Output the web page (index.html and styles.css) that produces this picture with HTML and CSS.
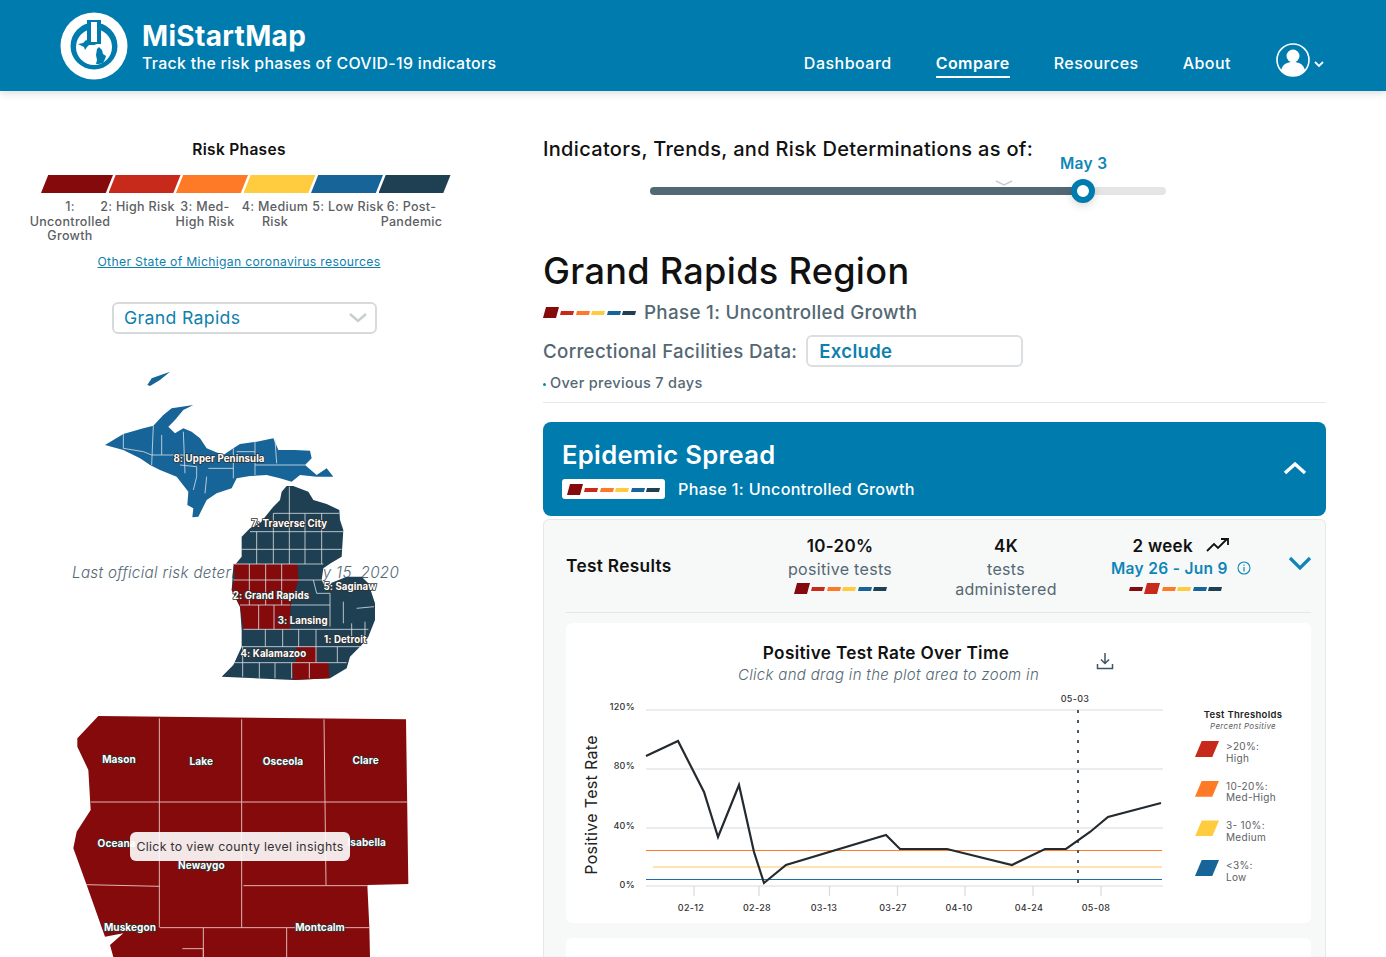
FILE: index.html
```html
<!DOCTYPE html>
<html lang="en">
<head>
    <meta charset="UTF-8">
    <meta name="viewport" content="width=device-width, initial-scale=1.0">
    <title>MiStartMap</title>
    <link rel="stylesheet" href="styles.css">
</head>
<body>

<svg class="defs">
    <symbol id="bar-first" viewBox="0 0 93 11">
        <polygon points="3,0 16,0 13,11 0,11" fill="#850a0b"/>
        <polygon points="18,4 31,4 30,8 17,8" fill="#c7291a"/>
        <polygon points="34,4 47,4 46,8 33,8" fill="#ff7a26"/>
        <polygon points="49,4 62,4 61,8 48,8" fill="#ffcc40"/>
        <polygon points="65,4 78,4 77,8 64,8" fill="#176499"/>
        <polygon points="80,4 93,4 92,8 79,8" fill="#1f3f52"/>
    </symbol>
    <symbol id="bar-second" viewBox="0 0 93 11">
        <polygon points="1,4 14,4 13,8 0,8" fill="#850a0b"/>
        <polygon points="18,0 31,0 28,11 15,11" fill="#c7291a"/>
        <polygon points="34,4 47,4 46,8 33,8" fill="#ff7a26"/>
        <polygon points="49,4 62,4 61,8 48,8" fill="#ffcc40"/>
        <polygon points="65,4 78,4 77,8 64,8" fill="#176499"/>
        <polygon points="80,4 93,4 92,8 79,8" fill="#1f3f52"/>
    </symbol>
</svg>

<header class="top-bar">
    <svg class="logo" viewBox="0 0 68 68">
        <circle cx="34" cy="34" r="33.5" fill="#fff"/>
        <circle cx="34" cy="34" r="23.5" fill="#007bad"/>
        <circle cx="34" cy="35" r="18" fill="#fff"/>
        <rect x="27" y="8" width="14" height="24" fill="#007bad"/>
        <rect x="31" y="10" width="6" height="20" fill="#fff"/>
        <path d="M18 32l5-1 3-3 2 1 3 2 6 1-3 1-5 0-2 2-2 3-1-3-4-2z" fill="#007bad"/>
        <path d="M37 37l2-2 3 3 1 4 3 2-1 3-2 4-4 1-3 0 1-4-1-5z" fill="#007bad"/>
    </svg>
    <div class="brand">
        <div class="brand-name">MiStartMap</div>
        <div class="brand-tag">Track the risk phases of COVID-19 indicators</div>
    </div>
    <nav class="nav">
        <a class="nav-link">Dashboard</a>
        <a class="nav-link active">Compare</a>
        <a class="nav-link">Resources</a>
        <a class="nav-link">About</a>
        <svg class="avatar" viewBox="0 0 50 36">
            <circle cx="17" cy="17" r="16" fill="none" stroke="#fff" stroke-width="1.6"/>
            <circle cx="17" cy="13" r="6.5" fill="#fff"/>
            <path d="M5 27c2-6 6-8 12-8s10 2 12 8c-3 4-7 6-12 6s-9-2-12-6z" fill="#fff"/>
            <path d="M39 19l4 4 4-4" fill="none" stroke="#fff" stroke-width="1.8"/>
        </svg>
    </nav>
</header>

<main class="page">
    <section class="left-col">
        <h3 class="risk-title">Risk Phases</h3>
        <div class="risk-bars">
            <span class="risk-bar phase-1"></span>
            <span class="risk-bar phase-2"></span>
            <span class="risk-bar phase-3"></span>
            <span class="risk-bar phase-4"></span>
            <span class="risk-bar phase-5"></span>
            <span class="risk-bar phase-6"></span>
        </div>
        <div class="risk-labels">
            <div class="risk-label"><span>1:</span><span>Uncontrolled</span><span>Growth</span></div>
            <div class="risk-label"><span>2: High Risk</span></div>
            <div class="risk-label"><span>3: Med-</span><span>High Risk</span></div>
            <div class="risk-label"><span>4: Medium</span><span>Risk</span></div>
            <div class="risk-label"><span>5: Low Risk</span></div>
            <div class="risk-label"><span>6: Post-</span><span>Pandemic</span></div>
        </div>
        <a class="state-link">Other State of Michigan coronavirus resources</a>

        <div class="region-select">
            <span>Grand Rapids</span>
            <svg class="select-arrow" viewBox="0 0 18 10"><path d="M1 1l8 7 8-7" fill="none" stroke="#c8cdd0" stroke-width="2.4"/></svg>
        </div>

        <div class="state-map">
            <p class="map-note">Last official risk determination May 15, 2020</p>
            <svg class="state-svg" viewBox="0 0 1050 990">
                <path class="mi-blue" d="M262 75L275 55 330 35 300 60 270 78Z"/>
                <path class="mi-blue" d="M135 255L190 222 250 205 280 197 310 165 335 145 400 135 370 150 345 180 325 200 345 220 370 205 395 215 420 235 440 265 465 275 490 285 520 265 540 252 590 245 640 235 655 270 705 270 750 272 755 295 735 315 770 345 800 325 820 350 770 350 720 345 695 365 660 355 620 345 570 348 530 355 515 385 470 400 440 420 415 470 397 472 400 445 382 435 385 395 350 350 300 330 270 315 240 295 190 270Z"/>
                <path class="mi-navy" d="M680 378L700 378 745 395 760 420 800 432 838 450 840 480 850 510 845 590 812 610 790 625 785 660 800 690 815 668 860 650 905 650 925 670 945 730 945 780 925 830 905 855 870 890 860 925 810 955 700 960 485 950 520 915 545 860 545 810 540 740 515 690 520 620 545 590 545 530 570 505 600 490 640 440 660 420 665 395Z"/>
                <path class="mi-red" d="M520 612L712 612 716 658 692 735 690 808 550 808 540 740 515 690 525 650Z"/>
                <path class="mi-red" d="M708 862L768 860 770 907 805 907 808 955 700 960 696 908 708 906Z"/>
                <path class="mi-lines" d="M190 222V265L250 275 275 285M280 197L275 315M305 225V285M275 285H375M370 215L375 340M360 315L410 320V350L400 390M440 350L435 400M445 325H520M520 265V355M585 245V345M530 275H585M645 238L650 310M585 315H735"/>
                <path class="mi-lines" d="M640 460H838M570 515H850M545 568H845M520 612H790M520 660H785M540 735H690M550 808H925M545 860H905M520 908H860M590 515V612M640 460V612M688 380V612M735 460V612M785 460V612M568 612V735M617 612V735M665 612V735M596 735V808M642 735V808M616 808V860M668 808V860M716 808V860M768 808V907M832 860V907M548 860V950M598 908V955M645 908V955M695 908V955M748 908V955M760 660L770 700H810M810 700V800M850 725V790M890 745L942 740M875 790V830M915 785V830M692 735H810"/>
                <text class="map-label" x="477" y="306">8: Upper Peninsula</text>
                <text class="map-label" x="688" y="500">7: Traverse City</text>
                <text class="map-label" x="870" y="691">5: Saginaw</text>
                <text class="map-label" x="633" y="718">2: Grand Rapids</text>
                <text class="map-label" x="728" y="793">3: Lansing</text>
                <text class="map-label" x="856" y="850">1: Detroit</text>
                <text class="map-label" x="640" y="892">4: Kalamazoo</text>
            </svg>
        </div>

        <div class="county-map">
            <svg class="county-svg" viewBox="0 0 1080 771">
                <path class="mi-red" d="M115 48L1038 58 1045 552 922 555 928 682 930 771 160 771 150 735 190 700 135 710 80 555 40 445 50 395 92 330 85 210 52 140 52 115Z"/>
                <path class="county-lines" d="M298 55V683M545 58V683M792 58L798 555M92 306L1042 306M78 554L300 559M550 557H922M300 683H930M430 683V771M680 683V771M367 746H430V771"/>
                <text class="county-label" x="177" y="188">Mason</text>
                <text class="county-label" x="424" y="194">Lake</text>
                <text class="county-label" x="669" y="194">Osceola</text>
                <text class="county-label" x="917" y="191">Clare</text>
                <text class="county-label" x="170" y="441">Oceana</text>
                <text class="county-label" x="920" y="438">Isabella</text>
                <text class="county-label" x="424" y="507">Newaygo</text>
                <text class="county-label" x="210" y="692">Muskegon</text>
                <text class="county-label" x="780" y="692">Montcalm</text>
            </svg>
            <div class="county-tip">Click to view county level insights</div>
        </div>
    </section>

    <section class="right-col">
        <h2 class="asof-title">Indicators, Trends, and Risk Determinations as of:</h2>
        <div class="slider">
            <span class="slider-label">May 3</span>
            <svg class="slider-mark" viewBox="0 0 18 6"><path d="M1 1l8 4 8-4" fill="none" stroke="#c8cdd0" stroke-width="1.4"/></svg>
            <div class="slider-fill" style="width: 84%"></div>
            <span class="slider-thumb"></span>
        </div>

        <h1 class="region-title">Grand Rapids Region</h1>
        <div class="phase-row">
            <svg class="phase-bar"><use href="#bar-first"/></svg>
            <span>Phase 1: Uncontrolled Growth</span>
        </div>
        <div class="facility-row">
            <span>Correctional Facilities Data:</span>
            <div class="facility-select">Exclude</div>
        </div>
        <p class="period-note"><i class="dot"></i>Over previous 7 days</p>
        <hr class="divider">

        <div class="spread-head">
            <div>
                <h2 class="spread-title">Epidemic Spread</h2>
                <div class="spread-phase">
                    <span class="bar-pill"><svg class="phase-bar"><use href="#bar-first"/></svg></span>
                    <span>Phase 1: Uncontrolled Growth</span>
                </div>
            </div>
            <svg class="chev-up" viewBox="0 0 24 14"><path d="M2 12l10-9 10 9" fill="none" stroke="#fff" stroke-width="3.4"/></svg>
        </div>

        <div class="spread-body">
            <div class="metric-row">
                <div class="metric-name">Test Results</div>
                <div class="metric">
                    <b>10-20%</b>
                    <span>positive tests</span>
                    <svg class="phase-bar metric-bar"><use href="#bar-first"/></svg>
                </div>
                <div class="metric">
                    <b>4K</b>
                    <span>tests<br>administered</span>
                </div>
                <div class="metric">
                    <b>2 week
                        <svg class="trend" viewBox="0 0 24 16"><path d="M1 14l7-7 4 4 9-9M15 2h7v6" fill="none" stroke="#111" stroke-width="1.8"/></svg>
                    </b>
                    <span class="metric-date">May 26 - Jun 9
                        <svg class="info" viewBox="0 0 14 14"><circle cx="7" cy="7" r="6" fill="none" stroke="#0f86b8" stroke-width="1.1"/><path d="M7 6v4.500M7 3.500v1.300" stroke="#0f86b8" stroke-width="1.2"/></svg>
                    </span>
                    <svg class="phase-bar metric-bar trend-bar"><use href="#bar-second"/></svg>
                </div>
                <svg class="chev-down" viewBox="0 0 24 14"><path d="M2 2l10 10 10-10" fill="none" stroke="#0f86b8" stroke-width="3.2"/></svg>
            </div>

            <div class="chart-card">
                <div class="chart-head">
                    <div class="chart-text">
                        <h3>Positive Test Rate Over Time</h3>
                        <p>Click and drag in the plot area to zoom in</p>
                    </div>
                    <svg class="download" viewBox="0 0 18 18"><path d="M9 1v10M5 7.500l4 4 4-4M1.500 12v4.500h15V12" fill="none" stroke="#3f5563" stroke-width="1.5"/></svg>
                </div>
                <div class="chart-body">
                    <svg class="plot" viewBox="575 690 600 225">
                        <g class="grid">
                            <path d="M646 710h517M646 769h517M646 828h517M646 886h517"/>
                            <path d="M694 886v10M759 886v10M829.500 886v10M897.500 886v10M965 886v10M1033 886v10M1101 886v10"/>
                        </g>
                        <path d="M646 850.500h516" stroke="#ff7a26" stroke-width="1.200"/>
                        <path d="M653 867h509" stroke="#ffc65c" stroke-width="1.200"/>
                        <path d="M646 879.500h516" stroke="#1b6fa8" stroke-width="1.200"/>
                        <path d="M1078 710v176" stroke="#4a5a66" stroke-width="2" stroke-dasharray="3 7"/>
                        <polyline class="line" points="646,756 678,741 704,792 718,837 739,785 754,852 764,883 786,865 886,835 900,849 947,849 1012,865 1045,849 1066,849 1090,832 1108,817 1161,803"/>
                        <text class="tick" x="1075" y="702" text-anchor="middle">05-03</text>
                        <text class="tick" x="635" y="710" text-anchor="end">120%</text>
                        <text class="tick" x="635" y="769" text-anchor="end">80%</text>
                        <text class="tick" x="635" y="829" text-anchor="end">40%</text>
                        <text class="tick" x="635" y="888" text-anchor="end">0%</text>
                        <text class="tick" x="691" y="911" text-anchor="middle">02-12</text>
                        <text class="tick" x="757" y="911" text-anchor="middle">02-28</text>
                        <text class="tick" x="824" y="911" text-anchor="middle">03-13</text>
                        <text class="tick" x="893" y="911" text-anchor="middle">03-27</text>
                        <text class="tick" x="959" y="911" text-anchor="middle">04-10</text>
                        <text class="tick" x="1029" y="911" text-anchor="middle">04-24</text>
                        <text class="tick" x="1096" y="911" text-anchor="middle">05-08</text>
                        <text class="axis-title" transform="translate(597 805) rotate(-90)" text-anchor="middle">Positive Test Rate</text>
                    </svg>
                    <div class="legend">
                        <div class="legend-title">Test Thresholds</div>
                        <div class="legend-sub">Percent Positive</div>
                        <div class="legend-item"><span class="swatch phase-2"></span><span>&gt;20%:<br>High</span></div>
                        <div class="legend-item"><span class="swatch phase-3"></span><span>10-20%:<br>Med-High</span></div>
                        <div class="legend-item"><span class="swatch phase-4"></span><span>3- 10%:<br>Medium</span></div>
                        <div class="legend-item"><span class="swatch phase-5"></span><span>&lt;3%:<br>Low</span></div>
                    </div>
                </div>
            </div>
            <div class="chart-card next-card"></div>
        </div>
    </section>
</main>

</body>
</html>
```
FILE: styles.css
```css
* {
    box-sizing: border-box;
}

html, body {
    height: 957px;
    margin: 0;
    overflow: hidden;
}

body {
    font-family: Inter, "Open Sans", sans-serif;
    background-color: #fff;
    color: #111;
    letter-spacing: 0.02em;
}

h1, h2, h3, p {
    margin: 0;
}

.defs {
    display: none;
}

/* header */
.top-bar {
    height: 91px;
    padding: 12px 60px 0;
    display: flex;
    background-color: #007bad;
    box-shadow: 0 2px 8px rgba(0, 0, 0, 0.15);
    color: #fff;
}

.logo {
    width: 68px;
    height: 68px;
    flex: none;
}

.brand {
    margin-left: 14px;
}

.brand-name {
    font-size: 28px;
    font-weight: 700;
    line-height: 30px;
    margin-top: 9px;
}

.brand-tag {
    font-size: 15.900px;
    font-weight: 500;
    line-height: 22px;
    margin-top: 2px;
}

.nav {
    margin-left: auto;
    display: flex;
    gap: 44px;
    padding-top: 40px;
    font-size: 16px;
    font-weight: 500;
    letter-spacing: 0.03em;
}

.nav-link {
    height: 26px;
    line-height: 22px;
}

.nav-link.active {
    font-weight: 600;
    border-bottom: 2.5px solid #fff;
}

.avatar {
    width: 50px;
    height: 36px;
    margin-top: -9px;
    margin-left: 1px;
    flex: none;
}

/* left column */
.page {
    display: flex;
}

.left-col {
    width: 478px;
    flex: none;
}

.risk-title {
    text-align: center;
    font-size: 15.500px;
    font-weight: 600;
    line-height: 20px;
    margin-top: 49px;
}

.risk-bars {
    display: flex;
    margin: 15px 0 0 41px;
}

.risk-bar {
    width: 72px;
    height: 18px;
    margin-right: -4.500px;
    clip-path: polygon(10% 0, 100% 0, 90% 100%, 0 100%);
}

.phase-1 { background-color: #850a0b; }
.phase-2 { background-color: #c7291a; }
.phase-3 { background-color: #ff7a26; }
.phase-4 { background-color: #ffcc40; }
.phase-5 { background-color: #176499; }
.phase-6 { background-color: #1f3f52; }

.risk-labels {
    display: grid;
    grid-template-columns: 68px 67px 68px 72px 74px 53px;
    margin: 7px 0 0 36px;
    font-size: 12.500px;
    font-weight: 500;
    line-height: 14.500px;
    color: #5c6064;
}

.risk-label {
    display: flex;
    flex-direction: column;
    align-items: center;
    white-space: nowrap;
}

.state-link {
    display: block;
    margin-top: 9px;
    text-align: center;
    font-size: 12.200px;
    line-height: 18px;
    color: #0f7fae;
    text-decoration: underline;
}

.region-select {
    width: 265px;
    height: 32px;
    margin: 31px 0 0 112px;
    padding: 0 8px 0 10px;
    display: flex;
    align-items: center;
    justify-content: space-between;
    border: 2px solid #d7dadc;
    border-radius: 6px;
    font-size: 17.700px;
    color: #0f7fae;
}

.select-arrow {
    width: 18px;
    height: 10px;
}

.state-map {
    position: relative;
    width: 350px;
    height: 330px;
    margin: 26px 0 0 60px;
}

.map-note {
    position: absolute;
    left: 12px;
    top: 203px;
    white-space: nowrap;
    font-size: 15.200px;
    font-style: italic;
    font-weight: 300;
    color: #546873;
}

.state-svg {
    position: relative;
    display: block;
    width: 350px;
    height: 330px;
}

.mi-blue { fill: #176499; }
.mi-navy { fill: #1f3f52; }
.mi-red { fill: #850a0b; }

.mi-lines {
    fill: none;
    stroke: #d5dde2;
    stroke-width: 2.500;
}

.map-label, .county-label {
    fill: #fff;
    stroke: #333;
    paint-order: stroke;
    font-weight: 700;
    text-anchor: middle;
}

.map-label {
    font-size: 29px;
    stroke-width: 5px;
}

.county-map {
    position: relative;
    width: 360px;
    height: 257px;
    margin: 10px 0 0 60px;
}

.county-svg {
    display: block;
    width: 360px;
    height: 257px;
}

.county-label {
    font-size: 30px;
    stroke-width: 5px;
}

.county-lines {
    fill: none;
    stroke: #e0b5b5;
    stroke-width: 3;
}

.county-tip {
    position: absolute;
    left: 70px;
    top: 132px;
    width: 220px;
    height: 29px;
    border-radius: 6px;
    background: rgba(255, 255, 255, 0.9);
    font-size: 12.300px;
    line-height: 29px;
    text-align: center;
    color: #333;
}

/* right column */
.right-col {
    width: 783px;
    margin-left: 65px;
    flex: none;
}

.asof-title {
    margin-top: 46px;
    font-size: 20px;
    font-weight: 500;
    line-height: 24px;
}

.slider {
    position: relative;
    width: 516px;
    height: 8px;
    margin: 26px 0 0 107px;
    border-radius: 4px;
    background-color: #e5e5e5;
}

.slider-fill {
    height: 8px;
    border-radius: 4px;
    background-color: #546873;
}

.slider-label {
    position: absolute;
    left: 410px;
    top: -33px;
    font-size: 15.500px;
    font-weight: 600;
    color: #0f86b8;
}

.slider-mark {
    position: absolute;
    left: 345px;
    top: -7px;
    width: 18px;
    height: 6px;
}

.slider-thumb {
    position: absolute;
    left: 421px;
    top: -8px;
    width: 24px;
    height: 24px;
    border: 6px solid #007bad;
    border-radius: 50%;
    background: #fff;
    box-shadow: 0 3px 8px rgba(0, 0, 0, 0.15);
}

.region-title {
    margin-top: 54px;
    font-size: 36.100px;
    font-weight: 500;
    line-height: 44px;
}

.phase-row {
    margin-top: 8px;
    height: 22px;
    display: flex;
    align-items: center;
    gap: 8px;
    font-size: 18.800px;
    font-weight: 500;
    color: #546873;
}

.phase-bar {
    width: 93px;
    height: 11px;
    flex: none;
}

.facility-row {
    margin-top: 12px;
    display: flex;
    align-items: center;
    gap: 9px;
    font-size: 18.700px;
    font-weight: 500;
    color: #546873;
}

.facility-select {
    width: 217px;
    height: 32px;
    padding-left: 11px;
    border: 2px solid #dcdfe1;
    border-radius: 6px;
    font-size: 18.500px;
    font-weight: 600;
    line-height: 28px;
    color: #0f7fae;
}

.period-note {
    margin-top: 7px;
    font-size: 14.500px;
    font-weight: 500;
    line-height: 18px;
    color: #546873;
}

.dot {
    display: inline-block;
    width: 3px;
    height: 3px;
    margin-right: 4px;
    vertical-align: middle;
    background-color: #0f86b8;
    border-radius: 50%;
}

.divider {
    margin: 10px 0 0;
    border: 0;
    border-top: 1.500px solid #e6e8e9;
}

.spread-head {
    height: 94px;
    margin-top: 19px;
    padding: 18px 19px 0 19px;
    display: flex;
    justify-content: space-between;
    border-radius: 8px;
    background-color: #007bad;
    color: #fff;
}

.spread-title {
    font-size: 25.600px;
    font-weight: 600;
    line-height: 30px;
}

.spread-phase {
    margin-top: 9px;
    display: flex;
    align-items: center;
    gap: 13px;
    font-size: 16.200px;
    font-weight: 500;
}

.bar-pill {
    width: 103px;
    height: 20px;
    display: flex;
    align-items: center;
    justify-content: center;
    border-radius: 3px;
    background: #fff;
}

.chev-up {
    width: 24px;
    height: 14px;
    margin-top: 21px;
}

.spread-body {
    margin-top: 3px;
    height: 438px;
    padding: 0 14px 0 22px;
    overflow: hidden;
    border: 1.500px solid #e6e8e9;
    border-bottom: 0;
    border-radius: 6px 6px 0 0;
    background-color: #f7f8f8;
}

.metric-row {
    height: 93px;
    padding-top: 16px;
    display: grid;
    grid-template-columns: 190px 168px 164px 186px 1fr;
    border-bottom: 1.500px solid #e4e6e7;
}

.metric-name {
    align-self: center;
    margin-bottom: 18px;
    font-size: 17.300px;
    font-weight: 600;
}

.metric {
    display: flex;
    flex-direction: column;
    align-items: center;
    text-align: center;
    font-size: 16px;
    line-height: 20px;
    color: #546873;
}

.metric b {
    margin-bottom: 3px;
    font-size: 17px;
    font-weight: 600;
    color: #111;
}

.metric-date {
    font-size: 15.500px;
    font-weight: 600;
    color: #0f86b8;
}

.trend {
    width: 24px;
    height: 16px;
    margin-left: 8px;
    vertical-align: -1px;
}

.info {
    width: 14px;
    height: 14px;
    margin-left: 5px;
    vertical-align: -1px;
}

.metric-bar {
    margin-top: 4px;
}

.trend-bar {
    margin-right: 12px;
}

.chev-down {
    width: 24px;
    height: 14px;
    margin: 20px 0 0 14px;
}

.chart-card {
    height: 300px;
    margin-top: 10px;
    border-radius: 6px;
    background: #fff;
}

.next-card {
    margin-top: 15px;
    height: 19px;
    border-radius: 6px 6px 0 0;
}

.chart-head {
    height: 67px;
    padding-top: 20px;
    display: grid;
    grid-template-columns: 130px 380px 130px;
}

.chart-text {
    grid-column: 2;
    text-align: center;
}

.chart-text h3 {
    font-size: 17.200px;
    font-weight: 600;
    line-height: 20px;
}

.chart-text p {
    margin-top: 2px;
    padding-left: 5px;
    font-size: 15px;
    font-style: italic;
    font-weight: 300;
    line-height: 20px;
    color: #546873;
}

.download {
    width: 18px;
    height: 18px;
    margin-left: 20px;
    margin-top: 9px;
}

.chart-body {
    display: flex;
}

.plot {
    display: block;
    width: 600px;
    height: 225px;
    margin-left: 9px;
    flex: none;
}

.grid path {
    fill: none;
    stroke: #d9d9d9;
    stroke-width: 1.200;
}

.line {
    fill: none;
    stroke: #232a30;
    stroke-width: 2.200;
}

.tick {
    font-size: 9px;
    font-weight: 500;
    fill: #333;
}

.axis-title {
    font-size: 16px;
    fill: #222;
}

.legend {
    width: 96px;
    margin-left: 20px;
    padding-top: 18px;
    font-size: 10px;
    color: #5c6064;
}

.legend-title {
    text-align: center;
    font-size: 9.500px;
    font-weight: 600;
    line-height: 13px;
    color: #222;
    white-space: nowrap;
}

.legend-sub {
    text-align: center;
    font-size: 8px;
    font-style: italic;
    line-height: 10px;
    margin-bottom: 10px;
}

.legend-item {
    height: 39.700px;
    display: flex;
    gap: 7px;
    line-height: 11.500px;
}

.swatch {
    width: 24px;
    height: 16px;
    flex: none;
    clip-path: polygon(28% 0, 100% 0, 72% 100%, 0 100%);
}
```
